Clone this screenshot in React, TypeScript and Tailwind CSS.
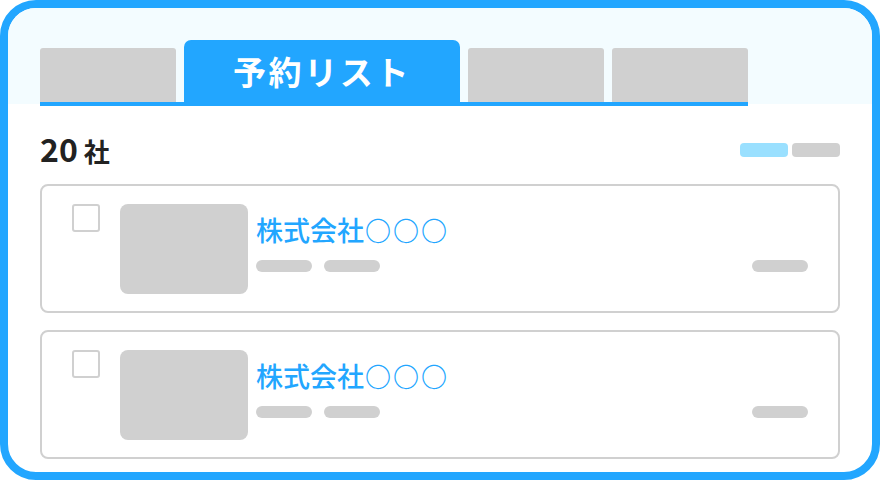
import React from 'react';

const font = { fontFamily: '"Noto Sans CJK JP", "Noto Sans", sans-serif' };

const Tab: React.FC<{ active?: boolean; label?: string }> = ({ active, label }) =>
  active ? (
    <div className="w-[276px] h-[62px] bg-[#22a6ff] rounded-t-[7px] flex items-center justify-center pt-[1px]">
      <span className="text-white text-[33px] font-bold tracking-[0.08em] leading-none">{label}</span>
    </div>
  ) : (
    <div className="w-[136px] h-[54px] bg-[#d0d0d0] rounded-t-[3px]" />
  );

const CompanyCard: React.FC<{ name: string; mark: string }> = ({ name, mark }) => (
  <div className="flex items-start border-2 border-[#d0d0d0] rounded-[8px] pl-[30px] pr-[30px] pt-[18px] pb-[17px]">
    <div className="w-[28px] h-[28px] border-2 border-[#d0d0d0] rounded-[3px] shrink-0" />
    <div className="w-[128px] h-[90px] bg-[#d0d0d0] rounded-[8px] ml-[20px] shrink-0" />
    <div className="flex-1 ml-[8px]">
      <p className="mt-[10px] text-[27px] leading-[32px] font-medium text-[#22a6ff] flex items-center">
        {name}
        <span className="flex">
          {mark.split('').map((c, i) => (
            <span key={i} className="inline-flex w-[28px] justify-center text-[26px] leading-none font-bold">{c}</span>
          ))}
        </span>
      </p>
      <div className="mt-[14px] flex items-center justify-between">
        <div className="flex gap-[12px]">
          <span className="w-[56px] h-[12px] rounded-full bg-[#d0d0d0]" />
          <span className="w-[56px] h-[12px] rounded-full bg-[#d0d0d0]" />
        </div>
        <span className="w-[56px] h-[12px] rounded-full bg-[#d0d0d0]" />
      </div>
    </div>
  </div>
);

export default function App() {
  return (
    <div className="w-[880px] h-[480px] bg-white" style={font}>
      <div className="w-full h-full border-8 border-[#22a6ff] rounded-[36px] overflow-hidden flex flex-col bg-white">
        {/* tabs */}
        <section className="bg-[#f3fcff] pt-[32px] px-[32px]">
          <div className="flex items-end gap-[8px]">
            <Tab />
            <Tab active label="予約リスト" />
            <Tab />
            <Tab />
          </div>
          <div className="relative z-10 w-[708px] h-[4px] bg-[#22a6ff] -mb-[2px]" />
        </section>

        {/* list */}
        <section className="px-[32px] pt-[28px]">
          <div className="h-[36px] flex items-center justify-between">
            <div className="flex items-baseline gap-[6px] text-[#222222] font-bold -mt-[4px]">
              <span className="text-[32px] leading-none">20</span>
              <span className="text-[26px] leading-none">社</span>
            </div>
            <div className="flex gap-[4px]">
              <span className="w-[48px] h-[14px] rounded-[4px] bg-[#9ae0ff]" />
              <span className="w-[48px] h-[14px] rounded-[4px] bg-[#d0d0d0]" />
            </div>
          </div>
          <div className="mt-[16px] flex flex-col gap-[17px]">
            <CompanyCard name="株式会社" mark="○○○" />
            <CompanyCard name="株式会社" mark="○○○" />
          </div>
        </section>
      </div>
    </div>
  );
}
